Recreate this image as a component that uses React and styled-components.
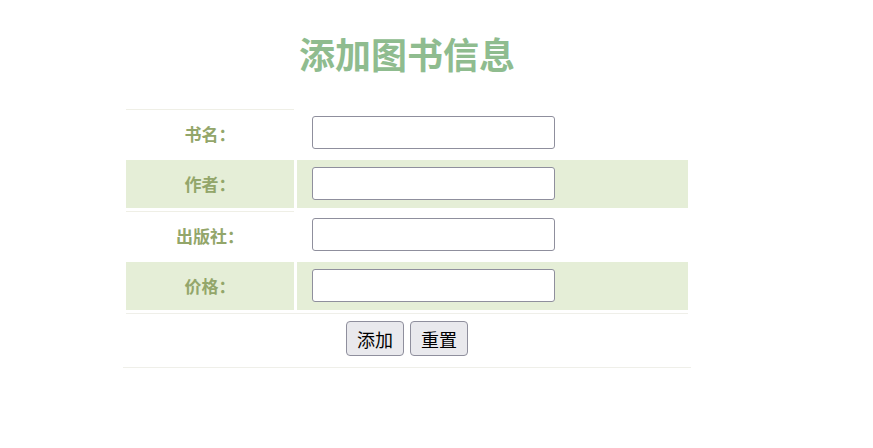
import React from 'react';
import styled, { createGlobalStyle } from 'styled-components';

const GlobalStyle = createGlobalStyle`
  body {
    margin: 0;
    background: #fff;
    font-family: "Noto Sans CJK SC", "Liberation Sans", sans-serif;
  }
`;

const Wrap = styled.div`
  width: 568px;
  margin-left: 123px;
`;

const Title = styled.h1`
  margin: 0;
  padding-top: 27px;
  height: 52px;
  line-height: 52px;
  text-align: center;
  font-size: 36px;
  font-weight: bold;
  color: #8fbc8f;
`;

const Table = styled.table`
  width: 568px;
  margin-top: 27px;
  border-collapse: separate;
  border-spacing: 3px;
  border-bottom: 1px solid #efefe9;
`;

const Row = styled.tr`
  background: ${({ green }) => (green ? '#e5eed7' : 'transparent')};
`;

const Label = styled.td`
  box-sizing: border-box;
  width: 168px;
  height: 48px;
  padding: 0 0 1px;
  text-align: center;
  font-size: 17px;
  font-weight: bold;
  color: #93a66a;
  border-top: ${({ line }) => (line ? '1px solid #efefe6' : 'none')};
`;

const Field = styled.td`
  box-sizing: border-box;
  height: 48px;
  padding: 0 0 1px 15px;
`;

const Input = styled.input`
  box-sizing: border-box;
  display: block;
  width: 243px;
  height: 33px;
  border: 1px solid #8f8f9d;
  border-radius: 3px;
  background: #fff;
  font-size: 14px;
  outline: none;
`;

const Actions = styled.td`
  box-sizing: border-box;
  height: 51px;
  padding: 7px 0 8px;
  text-align: center;
  border-top: 1px solid #efefe9;
`;

const Button = styled.button`
  box-sizing: border-box;
  width: 58px;
  height: 35px;
  margin: 0 3px;
  padding: 0;
  border: 1px solid #8f8f9d;
  border-radius: 4px;
  background: #e9e9ed;
  color: #000;
  font-family: "Noto Sans CJK SC", sans-serif;
  font-size: 18px;
  vertical-align: top;
`;

const fields = [
  { label: '书名：', green: false, line: true },
  { label: '作者：', green: true, line: false },
  { label: '出版社：', green: false, line: true },
  { label: '价格：', green: true, line: false },
];

export default function App() {
  return (
    <Wrap>
      <GlobalStyle />
      <Title>添加图书信息</Title>
      <Table>
        <tbody>
          {fields.map((f) => (
            <Row green={f.green} key={f.label}>
              <Label line={f.line}>{f.label}</Label>
              <Field>
                <Input type="text" />
              </Field>
            </Row>
          ))}
          <tr>
            <Actions colSpan={2}>
              <Button>添加</Button>
              <Button>重置</Button>
            </Actions>
          </tr>
        </tbody>
      </Table>
    </Wrap>
  );
}
